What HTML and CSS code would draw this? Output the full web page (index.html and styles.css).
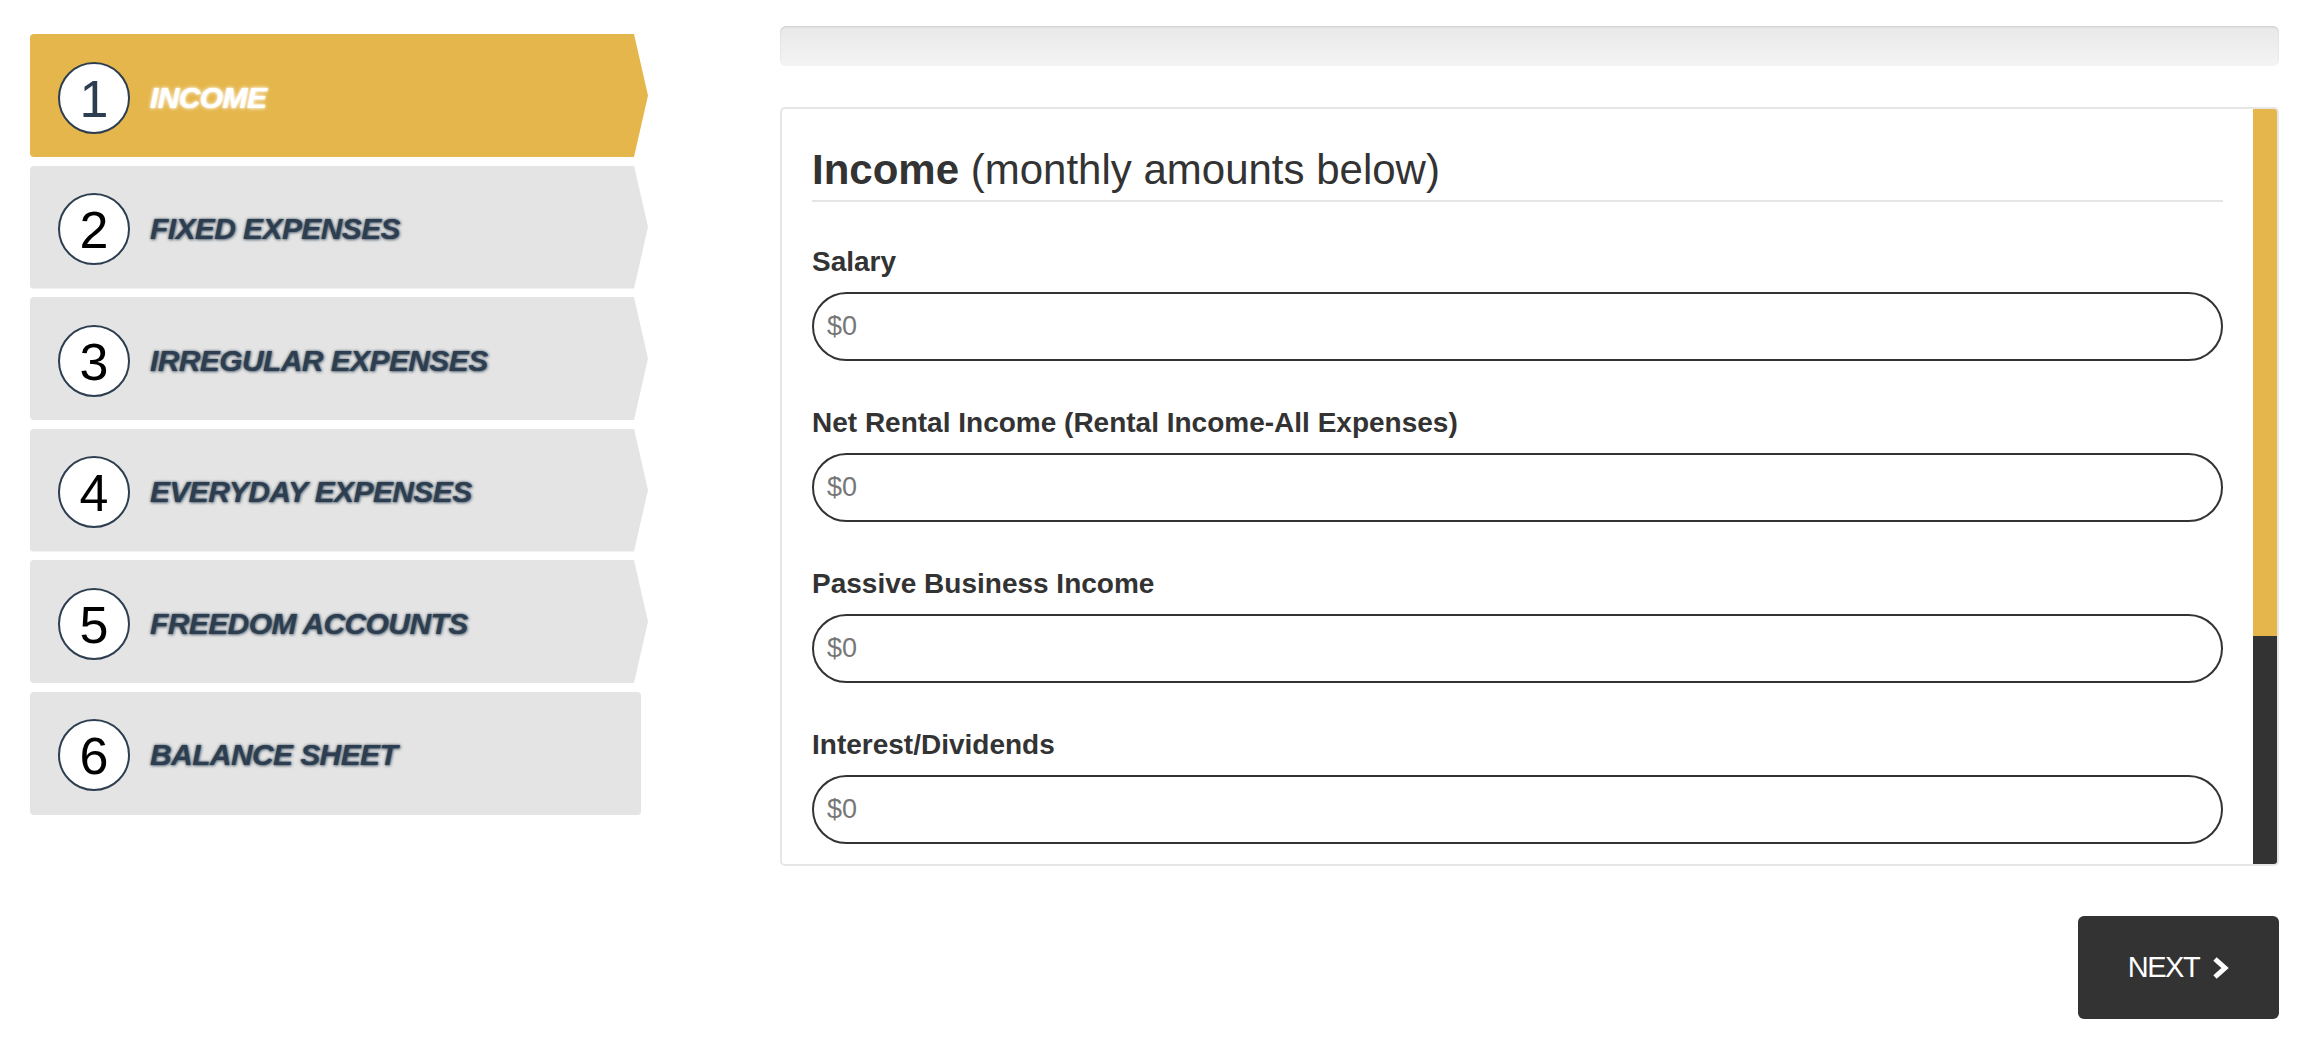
FILE: index.html
```html
<!DOCTYPE html>
<html lang="en">
<head>
<meta charset="utf-8">
<title>Budget Wizard - Income</title>
<link rel="stylesheet" href="styles.css">
</head>
<body>
<div class="page">
  <nav class="steps">
    <div class="step step-active">
      <span class="step-num">1</span>
      <span class="step-label">INCOME</span>
    </div>
    <div class="step">
      <span class="step-num">2</span>
      <span class="step-label">FIXED EXPENSES</span>
    </div>
    <div class="step">
      <span class="step-num">3</span>
      <span class="step-label">IRREGULAR EXPENSES</span>
    </div>
    <div class="step">
      <span class="step-num">4</span>
      <span class="step-label">EVERYDAY EXPENSES</span>
    </div>
    <div class="step">
      <span class="step-num">5</span>
      <span class="step-label">FREEDOM ACCOUNTS</span>
    </div>
    <div class="step step-last">
      <span class="step-num">6</span>
      <span class="step-label">BALANCE SHEET</span>
    </div>
  </nav>

  <main class="main">
    <div class="progress"></div>

    <section class="card">
      <div class="card-body">
        <h3 class="card-title"><b>Income</b> (monthly amounts below)</h3>

        <div class="field">
          <label class="field-label">Salary</label>
          <input class="field-input" type="text" placeholder="$0">
        </div>
        <div class="field">
          <label class="field-label">Net Rental Income (Rental Income-All Expenses)</label>
          <input class="field-input" type="text" placeholder="$0">
        </div>
        <div class="field">
          <label class="field-label">Passive Business Income</label>
          <input class="field-input" type="text" placeholder="$0">
        </div>
        <div class="field">
          <label class="field-label">Interest/Dividends</label>
          <input class="field-input" type="text" placeholder="$0">
        </div>
      </div>
      <div class="scrollbar">
        <div class="scroll-thumb"></div>
        <div class="scroll-track"></div>
      </div>
    </section>

    <div class="actions">
      <button class="btn-next" type="button">
        <span>NEXT</span>
        <svg class="chev" width="17" height="24" viewBox="0 0 17 24" aria-hidden="true">
          <polyline points="3,3 13,12 3,21" fill="none" stroke="#fff" stroke-width="5" stroke-linejoin="miter" stroke-linecap="butt"/>
        </svg>
      </button>
    </div>
  </main>
</div>
</body>
</html>
```

FILE: styles.css
```css
* {
  box-sizing: border-box;
}

html, body {
  margin: 0;
  padding: 0;
  background: #fff;
}

body {
  font-family: "Liberation Sans", Arial, Helvetica, sans-serif;
  color: #333;
}

.page {
  display: flex;
  align-items: flex-start;
  gap: 132px;
  padding: 26px 25px 0 30px;
}

/* ---------- wizard steps ---------- */
.steps {
  width: 618px;
  flex: none;
  margin-top: 8px;
  display: flex;
  flex-direction: column;
  gap: 8.5px;
}

.step {
  height: 123px;
  width: 618px;
  background: #e4e4e4;
  border-radius: 4px;
  display: flex;
  align-items: center;
  gap: 20px;
  padding: 4px 0 0 28px;
  clip-path: polygon(0 0, calc(100% - 14px) 0, 100% 50%, calc(100% - 14px) 100%, 0 100%);
}

.step-active {
  background: #e5b64b;
}

.step-last {
  width: 611px;
  clip-path: none;
}

.step-num {
  width: 72px;
  height: 72px;
  flex: none;
  border: 2px solid #2c3e50;
  border-radius: 50%;
  background: #fff;
  display: flex;
  align-items: center;
  justify-content: center;
  font-size: 52px;
  line-height: 1;
  color: #000;
  padding-top: 2px;
}

.step-active .step-num {
  color: #2c3e50;
}

.step-label {
  font-size: 30px;
  line-height: 30px;
  font-weight: bold;
  font-style: italic;
  letter-spacing: -0.6px;
  color: #2c3e50;
  text-shadow: 0 0 3px rgba(44, 62, 80, 0.8), 1px 1px 3px rgba(44, 62, 80, 0.5);
}

.step-active .step-label {
  color: #fff;
  text-shadow: 0 0 4px #fff, 0 0 2px rgba(255, 255, 255, 0.9);
}

/* ---------- main ---------- */
.main {
  flex: 1;
  min-width: 0;
}

.progress {
  height: 40px;
  border-radius: 6px;
  background: linear-gradient(to bottom, #e8e8e8 0%, #f4f4f4 100%);
  box-shadow: inset 0 1px 2px rgba(0, 0, 0, 0.12);
  margin-bottom: 41px;
}

.card {
  height: 759px;
  border: 2px solid #e6e6e6;
  border-radius: 5px;
  display: flex;
  overflow: hidden;
  background: #fff;
}

.card-body {
  flex: 1;
  min-width: 0;
  padding: 38px 30px 0 30px;
  overflow: hidden;
}

.card-title {
  margin: 0 0 40px;
  font-size: 42px;
  line-height: 46px;
  font-weight: normal;
  color: #333;
  padding-bottom: 7px;
  border-bottom: 2px solid #e5e5e5;
}

.card-title b {
  font-weight: bold;
}

.field {
  display: flex;
  flex-direction: column;
  margin-bottom: 42px;
}

.field-label {
  font-size: 28px;
  line-height: 40px;
  font-weight: bold;
  color: #333;
  margin-bottom: 10px;
}

.field-input {
  height: 69px;
  width: 100%;
  border: 2px solid #333;
  border-radius: 35px;
  padding: 0 13px;
  font-family: "Liberation Sans", Arial, Helvetica, sans-serif;
  font-size: 27px;
  color: #333;
  background: #fff;
  outline: none;
}

.field-input::placeholder {
  color: #777;
}

.scrollbar {
  width: 24px;
  flex: none;
  display: flex;
  flex-direction: column;
}

.scroll-thumb {
  height: 527px;
  background: #e5b64b;
}

.scroll-track {
  flex: 1;
  background: #333;
}

/* ---------- actions ---------- */
.actions {
  display: flex;
  justify-content: flex-end;
  margin-top: 50px;
}

.btn-next {
  width: 201px;
  height: 103px;
  border: none;
  border-radius: 6px;
  background: #333;
  color: #fff;
  font-family: "Liberation Sans", Arial, Helvetica, sans-serif;
  font-size: 29px;
  letter-spacing: -1.5px;
  display: flex;
  align-items: center;
  justify-content: center;
  gap: 13px;
  padding: 0;
  cursor: pointer;
}

.chev {
  display: block;
}
```
